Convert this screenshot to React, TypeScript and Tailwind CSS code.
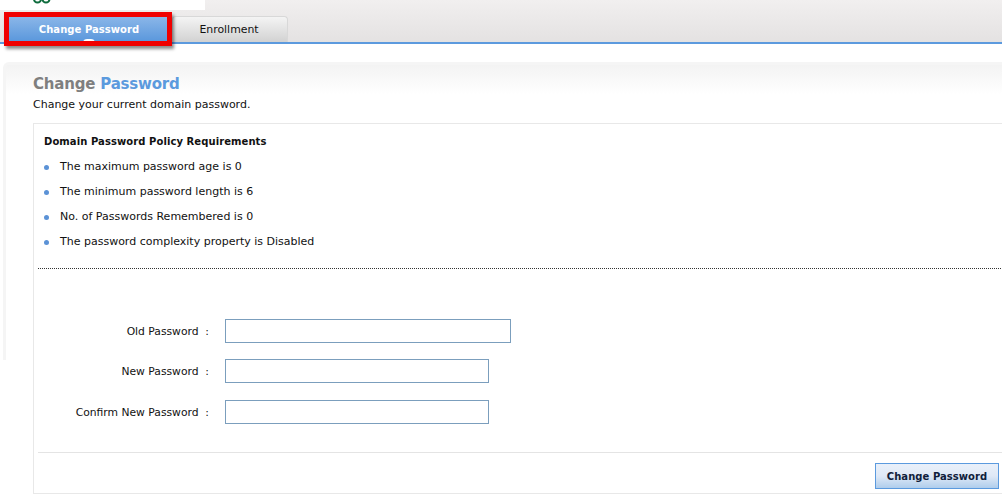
export default function App() {
  const font = "font-['DejaVu_Sans','Verdana',sans-serif]";
  const rules = [
    "The maximum password age is 0",
    "The minimum password length is 6",
    "No. of Passwords Remembered is 0",
    "The password complexity property is Disabled",
  ];
  const fields = [
    { label: "Old Password", w: "w-[286px]", mt: "mt-0" },
    { label: "New Password", w: "w-[264px]", mt: "mt-[16px]" },
    { label: "Confirm New Password", w: "w-[264px]", mt: "mt-[17px]" },
  ];
  return (
    <div className={`w-[1002px] h-[504px] overflow-hidden bg-white text-[11px] text-[#111] ${font}`}>
      <div className="relative h-[44px] border-b-2 border-[#5c9ade] bg-gradient-to-b from-[#f1efef] to-[#e4e2e2]">
        <div className="absolute left-0 top-0 w-[205px] h-[10px] bg-white overflow-hidden">
          <svg width="30" height="10" className="absolute left-[33px] top-0">
            <circle cx="4.5" cy="-1" r="3.5" fill="none" stroke="#0d6b3c" strokeWidth="2" />
            <circle cx="13" cy="-1" r="3.5" fill="none" stroke="#0d6b3c" strokeWidth="2" />
          </svg>
        </div>
        <div className="absolute left-[4px] top-[12px] flex items-start">
          <div className="relative z-10 w-[168px] h-[34px] border-[5px] border-[#f00000] shadow-[2px_3px_3px_rgba(0,0,0,0.45)] overflow-hidden bg-gradient-to-b from-[#8ab6e8] to-[#5b98dc] flex justify-center pl-[2px] pt-[5px] font-bold text-white text-[10px] tracking-[0.05px]">
            Change Password
            <div className="absolute left-[74px] top-[22px] w-[12px] h-[8px] rounded-full bg-white" />
          </div>
          <div className="ml-0 mt-[4px] w-[116px] h-[26px] border border-[#d8d8d8] border-b-0 rounded-t-[4px] bg-gradient-to-b from-[#f4f4f4] to-[#d2d2d2] flex justify-center pt-[5px] pr-[2px] text-[10.9px] text-[#111]">
            Enrollment
          </div>
        </div>
      </div>

      <div className="ml-[3px] mt-[18px] h-[298px] rounded-tl-[6px] border-l-[3px] border-t-[3px] border-[#f5f5f5] bg-gradient-to-b from-[#f3f3f3] via-white via-[10%] to-white pl-[27px] pt-[9px]">
        <h1 className="text-[15px] tracking-[-0.2px] leading-[20px] font-bold text-[#7f7f7f]">
          Change <span className="text-[#5b9ade]">Password</span>
        </h1>
        <p className="mt-[3px] leading-[16px] text-[11px]">Change your current domain password.</p>

        <div className="mt-[10px] w-[985px] h-[371px] border border-[#e8e8e8] bg-white px-[4px]">
          <h2 className="ml-[6px] mt-[11px] leading-[14px] font-bold text-[10px] tracking-[0.08px]">Domain Password Policy Requirements</h2>
          <ul className="ml-[6px] mt-[6px]">
            {rules.map((r) => (
              <li key={r} className="flex items-center h-[25px]">
                <span className="w-[5px] h-[5px] rounded-full bg-[#5b92d6] mr-[11px]" />
                {r}
              </li>
            ))}
          </ul>
          <div className="mt-[13px] border-t border-dotted border-[#333]" />
          <form className="mt-[50px]">
            {fields.map((f) => (
              <div key={f.label} className={`flex items-center ${f.mt}`}>
                <label className="w-[171px] pt-[2px] text-right text-[10.75px] whitespace-pre">{f.label}  :</label>
                <input type="text" className={`ml-[16px] h-[24px] ${f.w} border border-[#7b9ebd] bg-white`} />
              </div>
            ))}
          </form>
          <div className="mt-[28px] border-t border-[#e4e4e4] flex justify-end pt-[10px] pr-[14px]">
            <button className="w-[124px] h-[26px] border border-[#5b9ade] bg-gradient-to-b from-[#e9f0fa] via-[#dfe9f6] to-[#afcdec] font-bold text-[10px] tracking-[0.05px] text-[#10203a]">
              Change Password
            </button>
          </div>
        </div>
      </div>
    </div>
  );
}
